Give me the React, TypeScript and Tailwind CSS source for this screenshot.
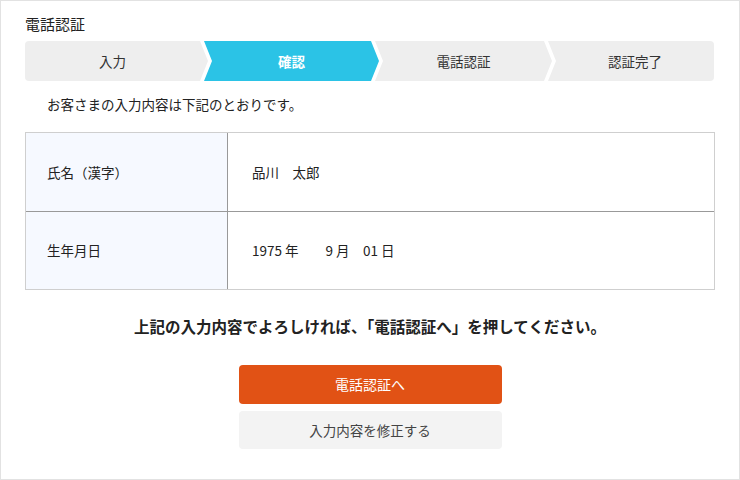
import React from 'react';

const steps = [
  { label: '入力', w: 'w-[183px]' },
  { label: '確認', w: 'w-[175px]' },
  { label: '電話認証', w: 'w-[177px]' },
  { label: '認証完了', w: 'w-[166px]' },
];

const Stepper = ({ current }: { current: number }) => (
  <div className="flex h-[40px]">
    {steps.map((step, i) => {
      const first = i === 0;
      const last = i === steps.length - 1;
      const shape = first
        ? 'rounded-l-[4px] [clip-path:polygon(0_0,calc(100%_-_8px)_0,100%_50%,calc(100%_-_8px)_100%,0_100%)]'
        : last
          ? '-ml-[4px] rounded-r-[4px] [clip-path:polygon(0_0,100%_0,100%_100%,0_100%,8px_50%)]'
          : '-ml-[4px] [clip-path:polygon(0_0,calc(100%_-_8px)_0,100%_50%,calc(100%_-_8px)_100%,0_100%,8px_50%)]';
      const active = i === current;
      return (
        <div
          key={step.label}
          className={`flex shrink-0 items-center justify-center text-[13.5px] ${step.w} ${shape} ${
            active ? 'bg-[#2bc3e6] font-bold text-white' : 'bg-[#eeeeee] text-[#333]'
          } ${first ? 'pr-[8px]' : last ? 'pl-[8px]' : 'px-[8px]'}`}
        >
          {step.label}
        </div>
      );
    })}
  </div>
);

const rows = [
  { label: '氏名（漢字）', value: <span>品川　太郎</span> },
  {
    label: '生年月日',
    value: <span className="whitespace-pre">1975 年　　9 月　01 日</span>,
  },
];

export default function App() {
  return (
    <div
      className="h-[480px] w-[740px] border border-[#e2e2e2] bg-white text-[#222]"
      style={{ fontFamily: '"Noto Sans CJK JP", "Noto Sans", sans-serif' }}
    >
      <div className="px-[24px] pt-[12px]">
        <h1 className="text-[15px] leading-[22px]">電話認証</h1>
        <div className="mt-[6px]">
          <Stepper current={1} />
        </div>
        <p className="mt-[12px] pl-[22px] text-[13.5px] leading-[22px]">
          お客さまの入力内容は下記のとおりです。
        </p>

        <div className="mt-[17px] border border-[#cfcfcf]">
          {rows.map((row, i) => (
            <div
              key={row.label}
              className={`flex h-[78px] ${i > 0 ? 'border-t border-[#999]' : ''}`}
            >
              <div className="flex w-[202px] items-center border-r border-[#999] bg-[#f6f9ff] pl-[21px] text-[13.5px]">
                {row.label}
              </div>
              <div className="flex flex-1 items-center pl-[24px] text-[13.5px]">{row.value}</div>
            </div>
          ))}
        </div>

        <p className="mt-[25px] text-center text-[15.5px] font-bold leading-[22px]">
          上記の入力内容でよろしければ、「電話認証へ」を押してください。
        </p>

        <div className="mt-[28px] flex flex-col items-center gap-[7px]">
          <button className="h-[39px] w-[263px] rounded-[4px] bg-[#e15215] text-[14px] text-white">
            電話認証へ
          </button>
          <button className="h-[38px] w-[263px] rounded-[4px] bg-[#f3f3f3] text-[13.5px] text-[#444]">
            入力内容を修正する
          </button>
        </div>
      </div>
    </div>
  );
}
